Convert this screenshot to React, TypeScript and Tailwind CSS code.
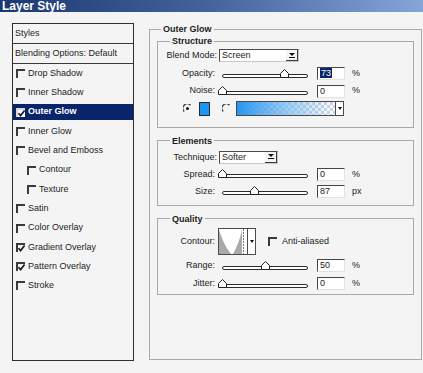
import React from "react";

const ink = "#1c1c1c";

function ListCheck({checked, light}: {checked?: boolean; light?: boolean}) {
  return (
    <span
      className={`relative block w-[9px] h-[9px] shrink-0 border-t-2 border-l-2 ${
        light ? "bg-white border-[#d8d8d8]" : "border-[#3a3a3a]"
      }`}
    >
      {checked && (
        <svg className="absolute left-[-1px] top-[-1px]" width="9" height="9" viewBox="0 0 9 9">
          <path d="M1.5 4.2 L3.6 6.6 L7.6 1.4" fill="none" stroke={ink} strokeWidth="1.7" />
        </svg>
      )}
    </span>
  );
}

function Arrow() {
  return (
    <svg width="6" height="5" viewBox="0 0 6 5">
      <path d="M0 0 H6 L3 3 Z" fill="#111" />
      <rect x="0" y="4" width="6" height="1" fill="#111" />
    </svg>
  );
}

function Select({label, width}: {label: string; width: number}) {
  return (
    <div
      className="flex h-[13px] bg-white border border-[#4a4a4a] border-r-[#c8c8c8] border-b-[#c8c8c8]"
      style={{width}}
    >
      <div className="flex-1 pl-[2px] leading-[11px]">{label}</div>
      <div className="w-[12px] h-full flex items-center justify-center border-r border-b border-[#3a3a3a] bg-[#f4f4f4]">
        <Arrow />
      </div>
    </div>
  );
}

// pos = thumb position along the track, 0..100
function Slider({pos}: {pos: number}) {
  const x = 4 + (pos / 100) * 86 - 4.5;
  return (
    <div className="relative w-[94px] h-[12px] px-[4px] pt-[6px]">
      <div className="h-[4px] border border-[#2c2c2c] rounded-[2px] bg-white" />
      <svg className="absolute top-[1px]" style={{left: x}} width="9" height="9" viewBox="0 0 9 9">
        <path d="M4.5 0.5 L8.5 4.5 V8.5 H0.5 V4.5 Z" fill="#fff" stroke="#222" strokeWidth="1" />
      </svg>
    </div>
  );
}

function NumBox({value, selected}: {value: string; selected?: boolean}) {
  return (
    <div className="w-[28px] h-[13px] bg-white border border-[#454545] border-r-[#e2e2e2] border-b-[#e2e2e2] pl-[2px] leading-[11px]">
      {selected ? <span className="bg-[#0a246a] text-white px-[1px]">{value}</span> : value}
    </div>
  );
}

function SliderRow({
  label,
  value,
  pos,
  unit,
  selected,
  h = "h-[17.7px]",
}: {
  label: string;
  value: number;
  pos?: number;
  unit: string;
  selected?: boolean;
  h?: string;
}) {
  return (
    <div className={`flex items-center ${h}`}>
      <div className="w-[57px] text-right">{label}</div>
      <div className="ml-[3px]">
        <Slider pos={pos ?? value} />
      </div>
      <div className="ml-[5px]">
        <NumBox value={String(value)} selected={selected} />
      </div>
      <span className="ml-[7px]">{unit}</span>
    </div>
  );
}

function Radio({on}: {on?: boolean}) {
  return (
    <svg width="9" height="9" viewBox="0 0 9 9">
      <path d="M1.2 7.5 A4 4 0 0 1 7.5 1.2" fill="none" stroke="#3a3a3a" strokeWidth="1.3" />
      {on && <circle cx="4.5" cy="4.5" r="1.5" fill="#111" />}
    </svg>
  );
}

function Group({title, className, children}: {title: string; className?: string; children: React.ReactNode}) {
  return (
    <fieldset className={`border border-[#a9a9a9] ${className ?? ""}`}>
      <legend className="ml-[12px] px-[2px] font-bold leading-[10px]">{title}</legend>
      {children}
    </fieldset>
  );
}

const styleItems: {name: string; checked?: boolean; indent?: boolean; selected?: boolean}[] = [
  {name: "Drop Shadow"},
  {name: "Inner Shadow"},
  {name: "Outer Glow", checked: true, selected: true},
  {name: "Inner Glow"},
  {name: "Bevel and Emboss"},
  {name: "Contour", indent: true},
  {name: "Texture", indent: true},
  {name: "Satin"},
  {name: "Color Overlay"},
  {name: "Gradient Overlay", checked: true},
  {name: "Pattern Overlay", checked: true},
  {name: "Stroke"},
];

export default function App() {
  return (
    <div className="w-[423px] h-[373px] overflow-hidden bg-[#f4f4f4] text-[9px] text-[#1c1c1c] font-['Liberation_Sans',Arial,sans-serif]">
      {/* title bar */}
      <div className="h-[12px] bg-gradient-to-r from-[#1b3872] via-[#45649f] to-[#86a5d8] pl-[2px] text-white font-bold text-[12px] leading-[12px]">
        Layer Style
      </div>

      <div className="flex items-start">
        {/* styles list */}
        <div className="ml-[12px] mt-[11px] w-[122px] h-[338px] border border-[#2e2e2e]">
          <div className="h-[20px] border-b border-[#3a3a3a] pl-[2px] leading-[19px]">Styles</div>
          <div className="h-[20px] border-b border-[#3a3a3a] pl-[2px] leading-[19px]">Blending Options: Default</div>
          {styleItems.map((it) => (
            <div key={it.name} className="h-[19.3px] flex items-center">
              <div
                className={`w-full h-[16px] flex items-center gap-[3px] ${it.indent ? "pl-[14px]" : "pl-[3px]"} ${
                  it.selected ? "bg-[#0a246a] text-white font-bold" : ""
                }`}
              >
                <ListCheck checked={it.checked} light={it.selected} />
                <span>{it.name}</span>
              </div>
            </div>
          ))}
        </div>

        {/* outer glow */}
        <fieldset className="ml-[15px] mt-[12px] w-[273px] h-[336px] border border-[#a9a9a9] px-[7px]">
          <legend className="ml-[4px] px-[2px] font-bold leading-[10px]">Outer Glow</legend>

          <Group title="Structure" className="mt-[2px] pt-[1px] pb-[9px]">
            <div className="flex items-center h-[17.7px]">
              <div className="w-[59px] text-right">Blend Mode:</div>
              <div className="ml-[2px]">
                <Select label="Screen" width={80} />
              </div>
            </div>
            <SliderRow label="Opacity:" value={73} unit="%" selected />
            <SliderRow label="Noise:" value={0} unit="%" />
            <div className="flex items-center h-[17.7px] pl-[25px]">
              <Radio on />
              <div className="ml-[7px] w-[11px] h-[14px] bg-[#1e95f2] border border-[#2a2a2a]" />
              <div className="ml-[12px]">
                <Radio />
              </div>
              <div className="ml-[5px] flex h-[15px] border border-[#4a4a4a]">
                <div className="w-[98px] h-full bg-[repeating-conic-gradient(#cfd6de_0_25%,#ffffff_0_50%)] bg-[length:6px_6px]">
                  <div className="w-full h-full bg-gradient-to-r from-[#2596f0] via-[#6fb8f3]/70 to-transparent" />
                </div>
                <div className="w-[8px] h-full flex items-center justify-center border-l border-[#4a4a4a] bg-white">
                  <svg width="4" height="3" viewBox="0 0 4 3">
                    <path d="M0 0 H4 L2 3 Z" fill="#111" />
                  </svg>
                </div>
              </div>
            </div>
          </Group>

          <Group title="Elements" className="mt-[8px] pt-[3px] pb-[5px]">
            <div className="flex items-center h-[17px]">
              <div className="w-[59px] text-right">Technique:</div>
              <div className="ml-[2px]">
                <Select label="Softer" width={59} />
              </div>
            </div>
            <SliderRow label="Spread:" value={0} unit="%" h="h-[17px]" />
            <SliderRow label="Size:" value={87} pos={38} unit="px" h="h-[17px]" />
          </Group>

          <Group title="Quality" className="mt-[8px] pt-[3px] pb-[1px]">
            <div className="flex items-center h-[30px]">
              <div className="w-[57px] text-right">Contour:</div>
              <div className="ml-[3px] flex h-[27px] border border-[#4a4a4a]">
                <svg width="28" height="25" viewBox="0 0 28 25" className="bg-white">
                  <path d="M0 25 V1 C3 10 7 19 12 25 Z" fill="#a9a9a9" />
                  <path d="M14 25 C18 18 21 10 23 1 V25 Z" fill="#a9a9a9" />
                  <path d="M24.5 0 V25" stroke="#777" strokeWidth="1" strokeDasharray="2 1" />
                </svg>
                <div className="w-[8px] h-full flex items-center justify-center border-l border-[#4a4a4a] bg-white">
                  <svg width="4" height="3" viewBox="0 0 4 3">
                    <path d="M0 0 H4 L2 3 Z" fill="#111" />
                  </svg>
                </div>
              </div>
              <div className="ml-[12px]">
                <ListCheck />
              </div>
              <span className="ml-[5px]">Anti-aliased</span>
            </div>
            <SliderRow label="Range:" value={50} unit="%" h="h-[18px]" />
            <SliderRow label="Jitter:" value={0} unit="%" h="h-[18px]" />
          </Group>
        </fieldset>
      </div>
    </div>
  );
}
